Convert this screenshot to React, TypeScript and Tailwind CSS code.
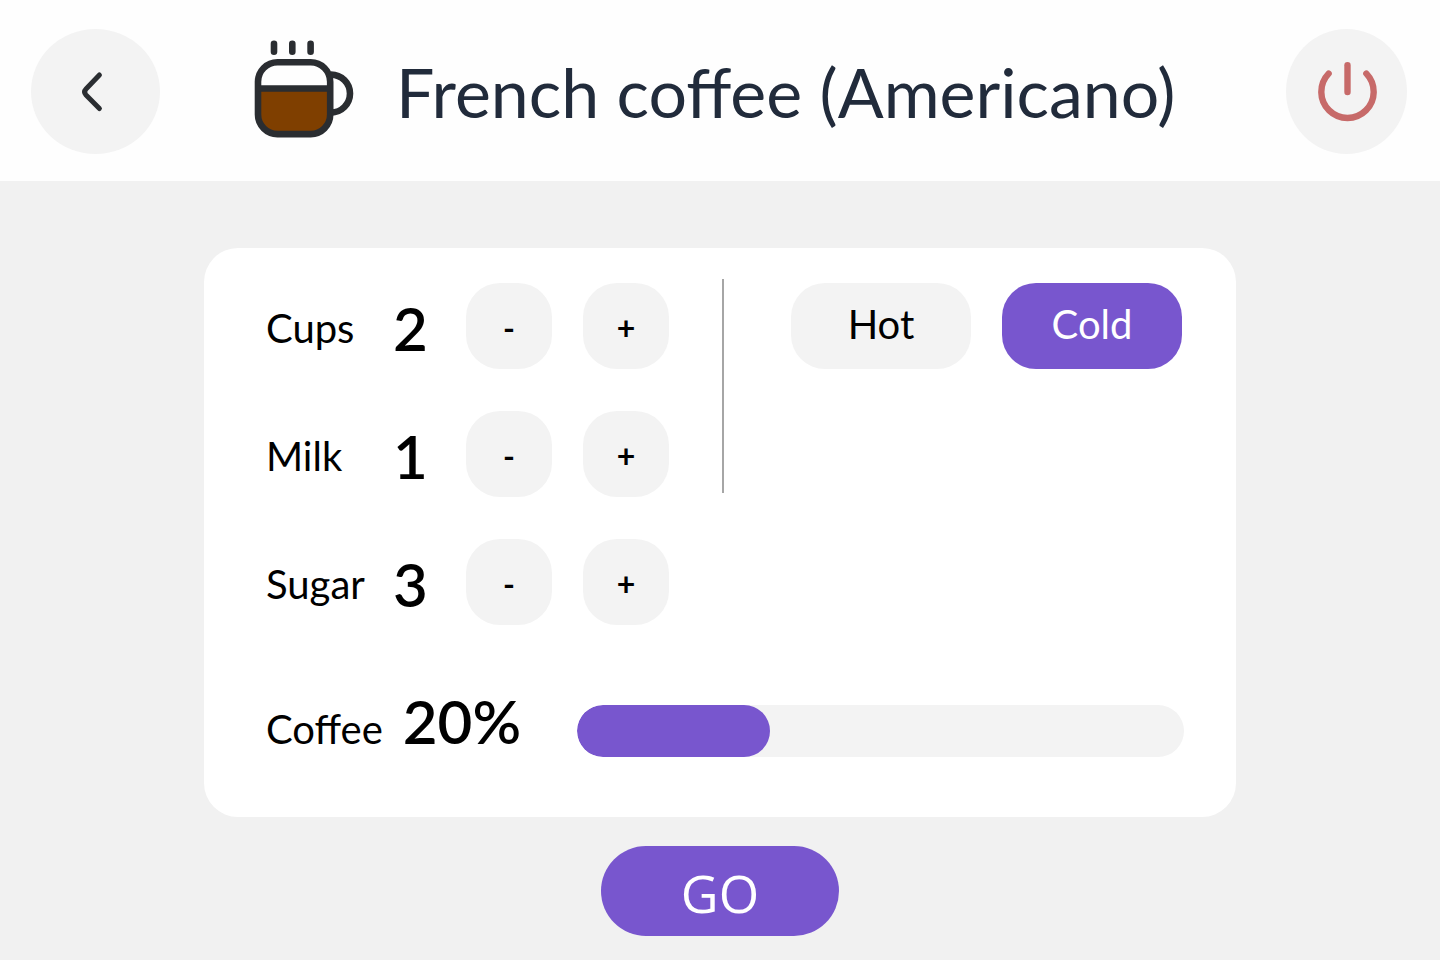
import { useState } from "react";

function ChevronIcon() {
  return (
    <svg width="40" height="48" viewBox="0 0 40 48" fill="none" aria-hidden="true">
      <path
        d="M23.4 7 L10 21 Q7.2 24 10 27 L23.4 40.5"
        stroke="#2a2d31"
        strokeWidth="5"
        strokeLinecap="round"
        strokeLinejoin="round"
      />
    </svg>
  );
}

function CupIcon() {
  return (
    <svg width="100" height="104" viewBox="254 40 100 104" fill="none" aria-hidden="true">
      <path d="M258 88.5 H330 V114 A19.5 19.5 0 0 1 310.5 134 H277.5 A19.5 19.5 0 0 1 258 114 Z" fill="#7f3f00" />
      <g stroke="#2a2d31" strokeWidth="6.6">
        <rect x="258" y="62.3" width="72.2" height="71.8" rx="19.5" />
        <path d="M258 88.5 H330" />
        <path d="M331 74.6 A19 19 0 0 1 331 112.6" />
        <path d="M274 43.8 V51.8 M292.3 43.8 V51.8 M310.6 43.8 V51.8" strokeLinecap="round" />
      </g>
    </svg>
  );
}

function PowerIcon() {
  return (
    <svg width="62" height="62" viewBox="0 0 62 62" fill="none" aria-hidden="true">
      <g stroke="#c76a69" strokeWidth="6.4" strokeLinecap="round">
        <path d="M12.6 12.6 A26.2 26.2 0 1 0 50.4 12.6" />
        <path d="M31.5 4.2 V31" />
      </g>
    </svg>
  );
}

const stepClass =
  "flex h-[86px] w-[86px] items-center justify-center rounded-[34px] bg-[#f3f3f3] pt-1 text-[32px] font-bold leading-none";

function Stepper({ label, value, onChange }: { label: string; value: number; onChange: (value: number) => void }) {
  return (
    <div className="flex items-center">
      <div className="flex w-[200px] items-center gap-5 pt-1">
        <span className="min-w-[107px] text-[40px] leading-[60px]">{label}</span>
        <output aria-label={label} className="text-[60px] font-semibold leading-[60px]">
          {value}
        </output>
      </div>
      <div className="flex gap-[31px]">
        <button type="button" aria-label={`Less ${label}`} className={stepClass} onClick={() => onChange(Math.max(0, value - 1))}>
          -
        </button>
        <button type="button" aria-label={`More ${label}`} className={stepClass} onClick={() => onChange(value + 1)}>
          +
        </button>
      </div>
    </div>
  );
}

export default function App() {
  const [cups, setCups] = useState(2);
  const [milk, setMilk] = useState(1);
  const [sugar, setSugar] = useState(3);
  const [coffee, setCoffee] = useState(20);
  const [cold, setCold] = useState(true);

  const modeClass = "h-[86px] w-[180px] rounded-[34px] pb-1 text-[40px] leading-none";
  const selected = "bg-[#7856ce] text-white";
  const unselected = "bg-[#f3f3f3] text-black";

  return (
    <div className="min-h-screen bg-[#f1f1f1] pb-6 font-['Lato',sans-serif] text-black">
      <header className="flex items-center bg-[#fefefe] pt-[29px] pr-[33px] pb-[27px] pl-[31px]">
        <button type="button" aria-label="Back" className="flex h-[125px] w-[129px] shrink-0 items-center justify-center rounded-[50%] bg-[#f3f3f3]">
          <ChevronIcon />
        </button>
        <div className="flex grow items-center gap-[42px] pl-[94px]">
          <CupIcon />
          <h1 className="text-[68px] leading-[80px] text-[#212b3b]">French coffee (Americano)</h1>
        </div>
        <button type="button" aria-label="Power off" className="flex h-[125px] w-[121px] shrink-0 items-center justify-center rounded-[50%] bg-[#f3f3f3]">
          <PowerIcon />
        </button>
      </header>

      <main className="flex flex-col items-center pt-[67px]">
        <section className="w-full max-w-[1032px] rounded-[34px] bg-white pt-[31px] pr-[52px] pb-[60px] pl-[62px]">
          <div className="flex items-start">
            <div className="flex flex-col gap-[42px] pt-1">
              <Stepper label="Cups" value={cups} onChange={setCups} />
              <Stepper label="Milk" value={milk} onChange={setMilk} />
              <Stepper label="Sugar" value={sugar} onChange={setSugar} />
            </div>
            <div className="ml-[53px] h-[214px] w-[2px] bg-[#a6a6a6]" />
            <div className="ml-[67px] flex gap-[31px] pt-1">
              <button
                type="button"
                aria-pressed={!cold}
                onClick={() => setCold(false)}
                className={`${modeClass} ${cold ? unselected : selected}`}
              >
                Hot
              </button>
              <button
                type="button"
                aria-pressed={cold}
                onClick={() => setCold(true)}
                className={`${modeClass} ${cold ? selected : unselected}`}
              >
                Cold
              </button>
            </div>
          </div>

          <div className="mt-20 flex h-[52px] items-center">
            <div className="flex w-[311px] items-baseline gap-5 pb-3">
              <label htmlFor="coffee" className="text-[40px] leading-[60px]">
                Coffee
              </label>
              <output htmlFor="coffee" className="text-[60px] font-semibold leading-[60px]">
                {coffee}%
              </output>
            </div>
            <div className="relative h-[52px] grow overflow-hidden rounded-full bg-[#f3f3f3]">
              <div className="h-full rounded-full bg-[#7856ce]" style={{ width: `${15 + coffee * 0.84}%` }} />
              <input
                id="coffee"
                type="range"
                min={0}
                max={100}
                value={coffee}
                onChange={(event) => setCoffee(Number(event.target.value))}
                className="absolute inset-0 h-full w-full cursor-pointer opacity-0"
              />
            </div>
          </div>
        </section>

        <button
          type="button"
          className="mt-[29px] h-[90px] w-[238px] rounded-full bg-[#7856ce] pt-1 font-['Open_Sans',sans-serif] text-[52px] font-normal leading-none text-white"
        >
          GO
        </button>
      </main>
    </div>
  );
}
